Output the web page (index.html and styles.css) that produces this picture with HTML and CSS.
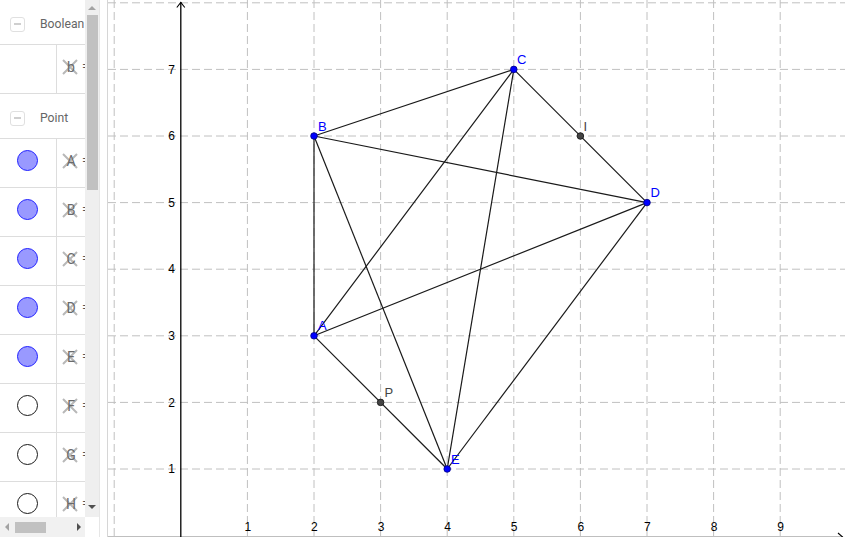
FILE: index.html
```html
<!DOCTYPE html>
<html>
<head>
<meta charset="utf-8">
<link rel="stylesheet" href="styles.css">
</head>
<body>
<div class="app">
  <div class="algebra">
    <div class="av-main">
      <div class="av-list">
        <div class="group"><span class="minus"></span><span class="gname">Boolean</span></div>
        <div class="item">
          <div class="marble-cell"></div>
          <div class="def"><span class="mark"><svg class="xmark" viewBox="0 0 16 16"><path d="M1 1L15 15M15 1L1 15"/></svg><span class="lbl">b</span></span><span class="eq">=</span></div>
        </div>
        <div class="group"><span class="minus"></span><span class="gname">Point</span></div>
        <div class="item">
          <div class="marble-cell"><span class="marble on"></span></div>
          <div class="def"><span class="mark"><svg class="xmark" viewBox="0 0 16 16"><path d="M1 1L15 15M15 1L1 15"/></svg><span class="lbl">A</span></span><span class="eq">=</span></div>
        </div>
        <div class="item">
          <div class="marble-cell"><span class="marble on"></span></div>
          <div class="def"><span class="mark"><svg class="xmark" viewBox="0 0 16 16"><path d="M1 1L15 15M15 1L1 15"/></svg><span class="lbl">B</span></span><span class="eq">=</span></div>
        </div>
        <div class="item">
          <div class="marble-cell"><span class="marble on"></span></div>
          <div class="def"><span class="mark"><svg class="xmark" viewBox="0 0 16 16"><path d="M1 1L15 15M15 1L1 15"/></svg><span class="lbl">C</span></span><span class="eq">=</span></div>
        </div>
        <div class="item">
          <div class="marble-cell"><span class="marble on"></span></div>
          <div class="def"><span class="mark"><svg class="xmark" viewBox="0 0 16 16"><path d="M1 1L15 15M15 1L1 15"/></svg><span class="lbl">D</span></span><span class="eq">=</span></div>
        </div>
        <div class="item">
          <div class="marble-cell"><span class="marble on"></span></div>
          <div class="def"><span class="mark"><svg class="xmark" viewBox="0 0 16 16"><path d="M1 1L15 15M15 1L1 15"/></svg><span class="lbl">E</span></span><span class="eq">=</span></div>
        </div>
        <div class="item">
          <div class="marble-cell"><span class="marble"></span></div>
          <div class="def"><span class="mark"><svg class="xmark" viewBox="0 0 16 16"><path d="M1 1L15 15M15 1L1 15"/></svg><span class="lbl">F</span></span><span class="eq">=</span></div>
        </div>
        <div class="item">
          <div class="marble-cell"><span class="marble"></span></div>
          <div class="def"><span class="mark"><svg class="xmark" viewBox="0 0 16 16"><path d="M1 1L15 15M15 1L1 15"/></svg><span class="lbl">G</span></span><span class="eq">=</span></div>
        </div>
        <div class="item">
          <div class="marble-cell"><span class="marble"></span></div>
          <div class="def"><span class="mark"><svg class="xmark" viewBox="0 0 16 16"><path d="M1 1L15 15M15 1L1 15"/></svg><span class="lbl">H</span></span><span class="eq">=</span></div>
        </div>
      </div>
      <div class="vscroll">
        <div class="sb-btn"><span class="tri-up"></span></div>
        <div class="vthumb"></div>
        <div class="sb-fill"></div>
        <div class="sb-btn"><span class="tri-down"></span></div>
      </div>
    </div>
    <div class="av-bottom">
      <div class="hscroll">
        <div class="sb-hbtn"><span class="tri-left"></span></div>
        <div class="hthumb"></div>
        <div class="sb-fill"></div>
        <div class="sb-hbtn"><span class="tri-right"></span></div>
      </div>
      <div class="corner"></div>
    </div>
  </div>
  <div class="splitter"></div>
  <div class="graphics">
    <svg class="canvas" width="737" height="537" viewBox="108 0 737 537">
      <g class="grid">
        <line x1="114.2" y1="0" x2="114.2" y2="537"/>
        <line x1="247.4" y1="0" x2="247.4" y2="537"/>
        <line x1="314" y1="0" x2="314" y2="537"/>
        <line x1="380.6" y1="0" x2="380.6" y2="537"/>
        <line x1="447.2" y1="0" x2="447.2" y2="537"/>
        <line x1="513.8" y1="0" x2="513.8" y2="537"/>
        <line x1="580.4" y1="0" x2="580.4" y2="537"/>
        <line x1="647" y1="0" x2="647" y2="537"/>
        <line x1="713.6" y1="0" x2="713.6" y2="537"/>
        <line x1="780.2" y1="0" x2="780.2" y2="537"/>
        <line x1="108" y1="469" x2="845" y2="469"/>
        <line x1="108" y1="402.4" x2="845" y2="402.4"/>
        <line x1="108" y1="335.8" x2="845" y2="335.8"/>
        <line x1="108" y1="269.2" x2="845" y2="269.2"/>
        <line x1="108" y1="202.6" x2="845" y2="202.6"/>
        <line x1="108" y1="136" x2="845" y2="136"/>
        <line x1="108" y1="69.4" x2="845" y2="69.4"/>
        <line x1="108" y1="2.8" x2="845" y2="2.8"/>
      </g>
      <g class="axis">
        <line x1="180.8" y1="2" x2="180.8" y2="537"/>
        <path d="M176.8 7.5L180.8 2.5L184.8 7.5"/>
        <line x1="108" y1="537.4" x2="843" y2="537.4"/>
        <path d="M838 533L843 537.4L838 541.8"/>
      </g>
      <g class="ticks-y">
        <text x="175" y="473.2">1</text>
        <text x="175" y="406.6">2</text>
        <text x="175" y="340">3</text>
        <text x="175" y="273.4">4</text>
        <text x="175" y="206.8">5</text>
        <text x="175" y="140.2">6</text>
        <text x="175" y="73.6">7</text>
      </g>
      <g class="ticks-x">
        <text x="247.8" y="530.5">1</text>
        <text x="314.4" y="530.5">2</text>
        <text x="381" y="530.5">3</text>
        <text x="447.6" y="530.5">4</text>
        <text x="514.2" y="530.5">5</text>
        <text x="580.8" y="530.5">6</text>
        <text x="647.4" y="530.5">7</text>
        <text x="714" y="530.5">8</text>
        <text x="780.6" y="530.5">9</text>
      </g>
      <g class="segs">
        <line x1="314" y1="335.8" x2="314" y2="136"/>
        <line x1="314" y1="335.8" x2="513.8" y2="69.4"/>
        <line x1="314" y1="335.8" x2="647" y2="202.6"/>
        <line x1="314" y1="335.8" x2="447.2" y2="469"/>
        <line x1="314" y1="136" x2="513.8" y2="69.4"/>
        <line x1="314" y1="136" x2="647" y2="202.6"/>
        <line x1="314" y1="136" x2="447.2" y2="469"/>
        <line x1="513.8" y1="69.4" x2="647" y2="202.6"/>
        <line x1="513.8" y1="69.4" x2="447.2" y2="469"/>
        <line x1="647" y1="202.6" x2="447.2" y2="469"/>
      </g>
      <g class="pts-gray">
        <circle cx="580.4" cy="136" r="3.3"/>
        <circle cx="380.6" cy="402.4" r="3.3"/>
      </g>
      <g class="pts-blue">
        <circle cx="314" cy="335.8" r="3.3"/>
        <circle cx="314" cy="136" r="3.3"/>
        <circle cx="513.8" cy="69.4" r="3.3"/>
        <circle cx="647" cy="202.6" r="3.3"/>
        <circle cx="447.2" cy="469" r="3.3"/>
      </g>
      <g class="lbl-blue">
        <text x="318" y="330">A</text>
        <text x="318" y="131">B</text>
        <text x="517" y="64">C</text>
        <text x="650.5" y="197">D</text>
        <text x="451" y="464">E</text>
      </g>
      <g class="lbl-gray">
        <text x="583.5" y="131">I</text>
        <text x="384.5" y="397">P</text>
      </g>
    </svg>
  </div>
</div>
</body>
</html>
```

FILE: styles.css
```css
html, body {
  margin: 0;
  padding: 0;
  background: #ffffff;
}
body {
  width: 845px;
  height: 537px;
  overflow: hidden;
  font-family: Roboto, "Liberation Sans", sans-serif;
}
.app {
  display: flex;
  width: 845px;
  height: 537px;
}
.algebra {
  width: 99px;
  border-right: 1px solid #e6e6e6;
  display: flex;
  flex-direction: column;
  background: #ffffff;
}
.av-main {
  display: flex;
  height: 517px;
}
.av-list {
  width: 85px;
  overflow: hidden;
  flex: none;
}
.group {
  border-bottom: 1px solid #dddddd;
  display: flex;
  align-items: center;
  padding-top: 4px;
  box-sizing: border-box;
  height: 45px;
  padding-left: 10px;
  white-space: nowrap;
}
.minus {
  width: 15px;
  height: 15px;
  box-sizing: border-box;
  border: 1px solid #e0e0e0;
  border-radius: 3px;
  display: flex;
  align-items: center;
  justify-content: center;
  flex: none;
}
.minus::after {
  content: "";
  width: 7px;
  height: 2px;
  background: #cfcfcf;
}
.gname {
  margin-left: 15px;
  font-size: 12.2px;
  color: #666666;
}
.item {
  height: 49px;
  box-sizing: border-box;
  border-bottom: 1px solid #dddddd;
  display: flex;
}
.marble-cell {
  width: 57px;
  flex: none;
  border-right: 1px solid #dddddd;
  display: flex;
  align-items: center;
  justify-content: center;
  padding-bottom: 5px;
  box-sizing: border-box;
}
.marble {
  width: 19px;
  height: 19px;
  border-radius: 50%;
  border: 1px solid #1a1a1a;
  background: #ffffff;
  margin-right: 2px;
}
.marble.on {
  background: #9999ff;
  border-color: #2020ff;
}
.def {
  display: flex;
  align-items: center;
  padding-left: 5px;
  padding-bottom: 5px;
  white-space: nowrap;
}
.mark {
  position: relative;
  width: 16px;
  height: 16px;
  display: flex;
  align-items: center;
  justify-content: center;
  flex: none;
}
.xmark {
  position: absolute;
  left: 0;
  top: 0;
  width: 16px;
  height: 16px;
}
.xmark path {
  stroke: #b8b8b8;
  stroke-width: 2;
  fill: none;
}
.lbl {
  position: relative;
  font-size: 14px;
  color: #6a6a6a;
  line-height: 16px;
  margin-left: 2px;
}
.eq {
  margin-left: 4px;
  font-size: 13px;
  color: #555555;
}
.vscroll {
  width: 14px;
  flex: none;
  background: #efefef;
  display: flex;
  flex-direction: column;
  align-items: center;
}
.sb-btn {
  height: 15px;
  width: 14px;
  display: flex;
  align-items: center;
  justify-content: center;
  flex: none;
}
.sb-fill {
  flex: 1;
}
.vthumb {
  width: 11px;
  height: 175px;
  background: #c1c1c1;
  flex: none;
}
.tri-up {
  width: 0;
  height: 0;
  border-left: 4px solid transparent;
  border-right: 4px solid transparent;
  border-bottom: 4px solid #a3a3a3;
}
.tri-down {
  width: 0;
  height: 0;
  border-left: 4px solid transparent;
  border-right: 4px solid transparent;
  border-top: 4px solid #505050;
  margin-top: -6px;
}
.av-bottom {
  display: flex;
  height: 20px;
}
.hscroll {
  width: 85px;
  background: #f1f1f1;
  display: flex;
  align-items: center;
}
.sb-hbtn {
  width: 14px;
  height: 20px;
  display: flex;
  align-items: center;
  justify-content: center;
  flex: none;
}
.hthumb {
  width: 31px;
  height: 11px;
  background: #c1c1c1;
  flex: none;
  margin-left: 1px;
}
.tri-left {
  width: 0;
  height: 0;
  border-top: 4px solid transparent;
  border-bottom: 4px solid transparent;
  border-right: 4px solid #a3a3a3;
}
.tri-right {
  width: 0;
  height: 0;
  border-top: 4px solid transparent;
  border-bottom: 4px solid transparent;
  border-left: 4px solid #505050;
  margin-left: 2px;
}
.corner {
  flex: 1;
  background: #ffffff;
}
.splitter {
  width: 7px;
  flex: none;
  background: #ffffff;
  border-right: 1px solid #d6d6d6;
}
.graphics {
  flex: 1;
  height: 537px;
  overflow: hidden;
  background: #ffffff;
}
.canvas {
  display: block;
}
.grid line {
  stroke: #c0c0c0;
  stroke-width: 1;
  stroke-dasharray: 8 4;
}
.axis line {
  stroke: #000000;
  stroke-width: 1.3;
}
.axis path {
  stroke: #000000;
  stroke-width: 1.1;
  fill: none;
}
.ticks-y text {
  font-family: "Liberation Sans", Arial, sans-serif;
  font-size: 12px;
  fill: #000000;
  text-anchor: end;
}
.ticks-x text {
  font-family: "Liberation Sans", Arial, sans-serif;
  font-size: 12px;
  fill: #000000;
  text-anchor: middle;
}
.segs line {
  stroke: #1a1a1a;
  stroke-width: 1.2;
}
.pts-blue circle {
  fill: #0000ff;
  stroke: #000080;
  stroke-width: 0.8;
}
.pts-gray circle {
  fill: #444444;
  stroke: #111111;
  stroke-width: 0.8;
}
.lbl-blue text {
  font-family: "Liberation Sans", Arial, sans-serif;
  font-size: 13px;
  fill: #0000ff;
}
.lbl-gray text {
  font-family: "Liberation Sans", Arial, sans-serif;
  font-size: 13px;
  fill: #444444;
}
```
